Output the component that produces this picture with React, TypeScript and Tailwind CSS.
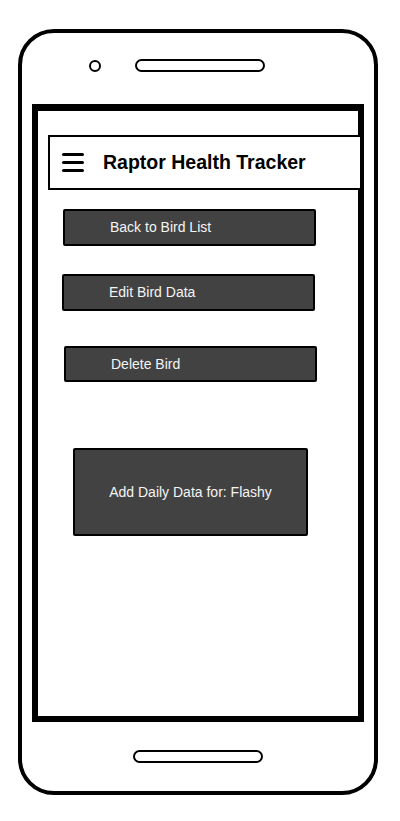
import React from 'react';

const actions = [
    { label: 'Back to Bird List', mt: 'mt-[19px]', ml: 'ml-[25px]', h: 'h-[37px]' },
    { label: 'Edit Bird Data', mt: 'mt-[28px]', ml: 'ml-[24px]', h: 'h-[37px]' },
    { label: 'Delete Bird', mt: 'mt-[35px]', ml: 'ml-[26px]', h: 'h-[36px]' },
];

const Hamburger: React.FC = () => (
    <div className="flex w-[22px] flex-col gap-[5px]">
        <span className="block h-[3px] rounded-full bg-black" />
        <span className="block h-[3px] rounded-full bg-black" />
        <span className="block h-[3px] rounded-full bg-black" />
    </div>
);

const App: React.FC = () => {
    return (
        <div className="h-[821px] w-[400px] bg-white pt-[29px] pl-[18px] font-['Liberation_Sans',Arial,sans-serif]">
            {/* phone body */}
            <div className="h-[766px] w-[360px] rounded-[36px] border-4 border-black">
                <div className="flex h-[71px] items-start pt-[26px]">
                    <div className="flex items-center">
                        <span className="ml-[67px] block h-[12px] w-[12px] rounded-full border-[2.5px] border-black" />
                        <span className="ml-[34px] block h-[13px] w-[130px] rounded-full border-2 border-black" />
                    </div>
                </div>

                {/* screen */}
                <div className="ml-[10px] h-[618px] w-[332px] border-[6px] border-t-[7px] border-black">
                    <div className="ml-[10px] mt-[24px] flex h-[55px] w-[314px] items-center border-2 border-black bg-white pl-[12px]">
                        <Hamburger />
                        <h1 className="ml-[19px] text-[19.5px] font-bold text-black">Raptor Health Tracker</h1>
                    </div>

                    {actions.map((a) => (
                        <button
                            key={a.label}
                            className={`${a.mt} ${a.ml} ${a.h} flex w-[253px] items-center rounded-[2px] border-2 border-black bg-[#424242] pl-[45px] text-[14px] text-[#f4f4f4]`}
                        >
                            {a.label}
                        </button>
                    ))}

                    <button className="ml-[35px] mt-[66px] flex h-[88px] w-[235px] items-center justify-center rounded-[2px] border-2 border-black bg-[#424242] text-[14px] text-[#f4f4f4]">
                        Add Daily Data for: Flashy
                    </button>
                </div>

                <span className="ml-[111px] mt-[28px] block h-[13px] w-[130px] rounded-full border-2 border-black" />
            </div>
        </div>
    );
};

export default App;
